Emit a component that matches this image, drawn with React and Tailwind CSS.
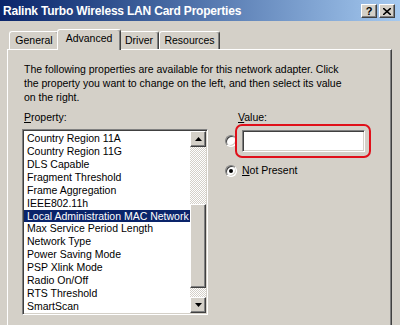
import React from 'react';

const ITEMS = [
  'Country Region 11A',
  'Country Region 11G',
  'DLS Capable',
  'Fragment Threshold',
  'Frame Aggregation',
  'IEEE802.11h',
  'Local Administration MAC Network',
  'Max Service Period Length',
  'Network Type',
  'Power Saving Mode',
  'PSP Xlink Mode',
  'Radio On/Off',
  'RTS Threshold',
  'SmartScan',
];

const SELECTED = 'Local Administration MAC Network';

// raised win2k bevel
const raised =
  'border border-t-white border-l-white border-r-[#404040] border-b-[#404040] shadow-[inset_-1px_-1px_0_#808080,inset_1px_1px_0_#d4d0c8]';

function CaptionButton({ children }) {
  return (
    <div
      className={`w-[16px] h-[14px] bg-[#d4d0c8] flex items-center justify-center text-[11px] font-bold leading-none text-black ${raised}`}
    >
      {children}
    </div>
  );
}

function Tab({ label, width, active }) {
  return (
    <div
      className={`flex items-center justify-center bg-[#d4d0c8] border-t border-l border-r border-t-white border-l-white border-r-[#404040] rounded-t-[3px] shadow-[inset_-1px_0_0_#808080] ${
        active ? 'h-[21px] -mx-[2px] relative z-10 -mb-px' : 'h-[18px]'
      }`}
      style={{ width }}
    >
      <span className={active ? 'pb-[2px]' : ''}>{label}</span>
    </div>
  );
}

function Radio({ checked }) {
  return (
    <div className="w-[12px] h-[12px] rounded-full bg-white border border-t-[#808080] border-l-[#808080] border-r-white border-b-white shadow-[inset_1px_1px_0_#404040,inset_-1px_-1px_0_#d4d0c8] flex items-center justify-center shrink-0">
      {checked && <div className="w-[4px] h-[4px] rounded-full bg-black" />}
    </div>
  );
}

function ScrollButton({ down }) {
  return (
    <div className={`w-[16px] h-[16px] bg-[#d4d0c8] flex items-center justify-center ${raised}`}>
      <svg width="7" height="4" viewBox="0 0 7 4">
        {down ? <path d="M0 0h7L3.5 4z" fill="#000" /> : <path d="M0 4h7L3.5 0z" fill="#000" />}
      </svg>
    </div>
  );
}

export default function App() {
  return (
    <div className="w-[400px] h-[325px] overflow-hidden bg-[#d4d0c8] text-[10.5px] text-black font-['Liberation_Sans',Arial,sans-serif]">
      {/* title bar */}
      <div className="h-[21px] flex items-center justify-between pl-[3px] pr-[5px] bg-gradient-to-r from-[#0a246a] to-[#a6caf0]">
        <span className="text-white font-bold text-[12px] tracking-[-0.2px]">
          Ralink Turbo Wireless LAN Card Properties
        </span>
        <div className="flex gap-[2px] pt-[1px]">
          <CaptionButton>?</CaptionButton>
          <CaptionButton>
            <svg width="8" height="7" viewBox="0 0 8 7">
              <path d="M0 0L8 7M8 0L0 7" stroke="#000" strokeWidth="1.6" />
            </svg>
          </CaptionButton>
        </div>
      </div>

      {/* tabs */}
      <div className="flex items-end pl-[9px] mt-[8px]">
        <Tab label="General" width={50} />
        <Tab label="Advanced" width={64} active />
        <Tab label="Driver" width={40} />
        <Tab label="Resources" width={61} />
      </div>

      {/* tab panel */}
      <div className="ml-[7px] w-[385px] h-[300px] border border-t-white border-l-white border-r-[#404040] border-b-[#404040] shadow-[inset_-1px_0_0_#808080] pt-[12px] pl-[16px] pr-[10px]">
        <p className="leading-[14px] whitespace-nowrap">
          The following properties are available for this network adapter. Click
          <br />
          the property you want to change on the left, and then select its value
          <br />
          on the right.
        </p>

        <div className="flex mt-[7px]">
          {/* property list */}
          <div className="w-[186px] -ml-[2px]">
            <div className="pl-[2px] leading-[13px]">
              <span className="underline">P</span>roperty:
            </div>
            <div className="mt-[5px] h-[186px] flex bg-white border border-t-[#808080] border-l-[#808080] border-r-white border-b-white shadow-[inset_1px_1px_0_#404040,inset_-1px_-1px_0_#d4d0c8] p-[1px]">
              <div className="flex-1 flex flex-col pt-[1px]">
                {ITEMS.map((item) => (
                  <div
                    key={item}
                    className={`h-[13px] leading-[13px] pl-[3px] whitespace-nowrap overflow-hidden ${
                      item === SELECTED ? 'bg-[#0a246a] text-white' : ''
                    }`}
                  >
                    {item}
                  </div>
                ))}
              </div>
              <div className="w-[16px] flex flex-col">
                <ScrollButton />
                <div className="h-[57px] bg-[repeating-conic-gradient(#ffffff_0_25%,#d4d0c8_0_50%)] bg-[length:2px_2px]" />
                <div className={`h-[84px] bg-[#d4d0c8] ${raised}`} />
                <div className="flex-1 bg-[repeating-conic-gradient(#ffffff_0_25%,#d4d0c8_0_50%)] bg-[length:2px_2px]" />
                <ScrollButton down />
              </div>
            </div>
          </div>

          {/* value */}
          <div className="ml-[17px] flex-1">
            <div className="pl-[13px] leading-[13px]">
              <span className="underline">V</span>alue:
            </div>
            <div className="flex items-center mt-[0px]">
              <Radio />
              <div className="ml-[-2px] w-[136px] h-[34px] rounded-[7px] border-[2.5px] border-[#e0101a] flex items-center justify-center">
                <div className="w-[123px] h-[22px] bg-white border border-t-[#808080] border-l-[#808080] border-r-white border-b-white shadow-[inset_1px_1px_0_#404040,inset_-1px_-1px_0_#d4d0c8]" />
              </div>
            </div>
            <div className="flex items-center mt-[5px] gap-[5px]">
              <Radio checked />
              <span>
                <span className="underline">N</span>ot Present
              </span>
            </div>
          </div>
        </div>
      </div>
    </div>
  );
}
